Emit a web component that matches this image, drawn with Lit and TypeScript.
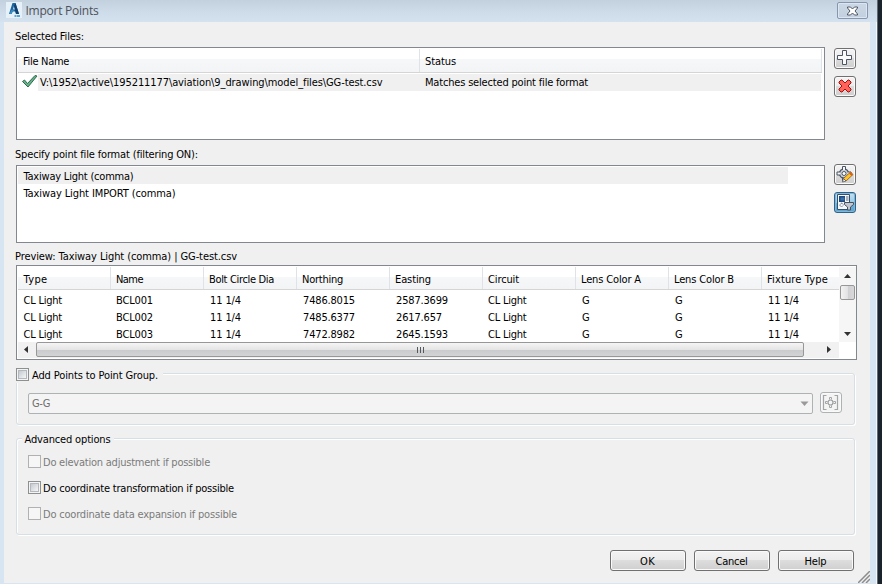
import { LitElement, html, css, svg } from "lit";
import { customElement, property } from "lit/decorators.js";

@customElement("fit-text")
class FitText extends LitElement {
  @property({ type: Number }) w = 0;
  @property() text = "";
  static styles = css`
    :host { display: inline-block; white-space: pre; flex: none; }
  `;
  render() {
    return html`<span>${this.text}</span>`;
  }
  firstUpdated() {
    const s = this.renderRoot.querySelector("span")!;
    const n = s.getBoundingClientRect().width;
    if (this.w && n) s.style.letterSpacing = (this.w - n) / this.text.length + "px";
  }
}

const t = (text: string, w = 0) => html`<fit-text .text=${text} .w=${w}></fit-text>`;

const icons: Record<string, unknown> = {
  plus: svg`<path d="M7.500 1.500h4v5h5v4h-5v5h-4v-5h-5v-4h5z" fill="#fbfbfc" stroke="#4b5563"/>`,
  del: svg`<path d="M4 5l2-2h1L10 6l3-3h1l2 2v1l-3 3 3 3v1l-2 2h-1l-3-3-3 3H6l-2-2v-1l3-3-3-3z" fill="#ff6258" stroke="#a80c0c"/>`,
  edit: svg`<circle cx="9" cy="8.500" r="4.500" fill="#c9ced6" stroke="#4b5563" stroke-width="1.300"/><path d="M7.500 5V1.500h3V5M5.500 7H2v3h3.500M12.500 7H16v3h-3.500M7.500 12v3.500h3" fill="#f5f5f5" stroke="#4b5563"/><circle cx="9" cy="8.500" r="2" fill="#fff" stroke="#4b5563"/><path d="M8.500 13.500l7-6.500 2.500 2.500-7 6.500z" fill="#ffc42a" stroke="#8a5a1c" stroke-width=".8"/><path d="M14 8.400l1.500-1.400L18 9.500l-1.500 1.400z" fill="#d8601b"/><path d="M8.500 13.500L11 16l-3.500 1z" fill="#fff" stroke="#555" stroke-width=".8"/>`,
  filter: svg`<path d="M2.500 1.500h12v15h-12z" fill="#f6f8fa" stroke="#34506c"/><path d="M4 3h6v6H4z" fill="#1d4a80"/><path d="M5.500 4.500h4v3h-4z" fill="#3971ab"/><path d="M11 3h2.500v5H11z" fill="#a9b0ba"/><path d="M6.500 10l2 2-2 2-2-2z" fill="none" stroke="#4a5a70" stroke-dasharray="1.500 1"/><path d="M9.500 9.500h9v2l-3 2.500v3h-3v-3l-3-2.500z" fill="#c3c8d0" stroke="#46525f"/>`,
  group: svg`<path d="M5.500 2.500h-3v14h3M13.500 2.500h3v14h-3" fill="none" stroke="#a2a4a6" stroke-width="1.200"/><circle cx="9.500" cy="9.500" r="2.500" fill="none" stroke="#999c9f" stroke-width="1.200"/><path d="M8.500 6.500v-2h2v2M8.500 12.500v2h2v-2M6.500 8.500h-2v2h2M12.500 8.500h2v2h-2" fill="none" stroke="#a2a4a6"/>`,
};

const iconButton = (name: string, cls = "") =>
  html`<button class="ib ${cls}"><svg width="20" height="19" viewBox="0 0 20 19">${icons[name]}</svg></button>`;

const check = (label: string, w: number, off = false) =>
  html`<div class="check ${off ? "off" : ""}"><i class="box"></i>${t(label, w)}</div>`;

const arrow = (d: string, cls = "") =>
  html`<svg class="arrow ${cls}" width="9" height="9" viewBox="0 0 9 9"><path d=${d} /></svg>`;

const columns: [string, number, string[], number][] = [
  ["Type", 24, ["CL Light", "CL Light", "CL Light"], 38.5],
  ["Name", 27, ["BCL001", "BCL002", "BCL003"], 37],
  ["Bolt Circle Dia", 65, ["11 1/4", "11 1/4", "11 1/4"], 31],
  ["Northing", 41, ["7486.8015", "7485.6377", "7472.8982"], 52],
  ["Easting", 36, ["2587.3699", "2617.657", "2645.1593"], 52],
  ["Circuit", 31, ["CL Light", "CL Light", "CL Light"], 38.5],
  ["Lens Color A", 60, ["G", "G", "G"], 7.5],
  ["Lens Color B", 60, ["G", "G", "G"], 7.5],
  ["Fixture Type", 61, ["11 1/4", "11 1/4", "11 1/4"], 31],
];

@customElement("app-root")
class AppRoot extends LitElement {
  static styles = css`
    :host { display: block; width: 882px; height: 584px; overflow: hidden; background: #1a232c;
      font: 11px/17px "DejaVu Sans Condensed", "DejaVu Sans", sans-serif; font-stretch: condensed; color: #000; }
    * { box-sizing: border-box; }
    .window { width: 878px; height: 584px; background: #d7e4f2; border-right: 1px solid #626a72;
      display: flex; flex-direction: column; box-shadow: inset -1px 0 #f4f8fc; }
    .title { height: 22px; flex: none; display: flex; align-items: flex-start; padding: 2px 9px 0 6px; background: linear-gradient(#c3d0de, #cfdce9 60%, #d4e1ee);
      font: 12px/18px "Open Sans", "Noto Sans", sans-serif; color: #4c5259; }
    .logo { margin-right: 3.5px; flex: none; }
    .close { margin-left: auto; width: 31px; height: 17px; border: 1px solid #8795b0; border-radius: 2px; background: linear-gradient(#cbd7e4, #c3d0df);
      box-shadow: inset 0 0 0 1px #dce6f0; display: grid; place-items: center; }
    .body { margin-left: 4px; width: 866px; height: 561px; background: #f0f0f0; padding: 6px 0 0 12px; position: relative; }
    .label { height: 17px; margin-left: -1px; }
    .l2 { margin-top: 6px; }
    .l3 { margin-top: 5px; }
    .line { display: flex; gap: 9px; }
    .list { background: #fff; border: 1px solid #828790; width: 809px; padding: 1px; flex: none; }
    .files { height: 93px; margin-top: 2px; }
    .formats { height: 78px; margin-top: 2px; }
    .tools { display: flex; flex-direction: column; gap: 7px; padding-top: 3px; }
    .formatline .tools { padding-top: 1px; }
    .ib { width: 22px; height: 21px; padding: 0; border: 1px solid #707070; border-radius: 3px; background: linear-gradient(#f4f4f4, #ebebeb 50%, #dcdcdc 50%, #cfcfcf); box-shadow: inset 0 0 0 1px #fafafa; display: grid; place-items: center; }
    .ib svg { display: block; }
    .ib.on { border-color: #2c628b; background: linear-gradient(#c5e1f2, #9bcbe6 50%, #6cb0d8 50%, #5ba3d0); box-shadow: inset 0 0 0 1px #82b6d4; }
    .ib.dim { border-color: #adb2b5; background: #f4f4f4; }
    .head { display: flex; background: linear-gradient(#fff 45%, #f6f7f9 45%, #f3f4f6); border-bottom: 1px solid #d5d5d5; }
    .head .cell { border-right: 1px solid #dfe2e6; }
    .files .head { height: 24px; line-height: 25px; margin-right: 1px; }
    .files .cell { width: 402px; padding-left: 5px; flex: none; }
    .filerow { display: flex; height: 17px; margin-top: 1px; }
    .tick { width: 20px; padding-left: 3px; flex: none; }
    .hl { flex: 1; background: #f0f0f0; display: flex; margin-right: 2px; }
    .hl .name { width: 387px; padding-left: 2px; flex: none; }
    .fmt { width: 770px; height: 17px; line-height: 19px; padding-left: 5.5px; }
    .fmt.sel { background: #f0f0f0; }
    .preview { width: 841px; height: 95px; border: 1px solid #828790; background: #fff; display: grid; grid-template: 75px 16px / 821px 17px; padding: 1px; }
    .grid .head { height: 23px; line-height: 25px; }
    .grid { overflow: hidden; }
    .grid .cell { width: 93px; flex: none; padding-left: 5px; }
    .grid .cell:first-child { padding-left: 5.5px; }
    .grid .cell:last-child { width: 76px; border: 0; }
    .rows { padding-top: 2px; }
    .row { display: flex; height: 17px; }
    .row .cell:nth-child(3), .row .cell:nth-child(n + 7), .row .cell:nth-child(5), .row .cell:nth-child(4) { padding-left: 6px; }
    .vbar { background: #f6f6f6; display: flex; flex-direction: column; align-items: center; padding: 5px 0 4px; }
    .vthumb { width: 15px; height: 15px; margin: 4px 0 auto; border: 1px solid #979797; border-radius: 2px; background: linear-gradient(90deg, #f3f3f3, #e2e2e4 50%, #cfd0d2 50%, #d8d8da); }
    .hbar { background: #f1f1f1; display: flex; align-items: center; padding: 0 5px 1px 3px; }
    .hthumb { width: 768px; height: 15px; margin: 0 auto 0 6px; border: 1px solid #979797; border-radius: 2px; background: linear-gradient(#f5f5f5, #e5e5e5 50%, #c9cacb 50%, #d3d4d5); display: flex; justify-content: center; align-items: center; gap: 2px; }
    .hthumb i { width: 1px; height: 6px; background: #55595e; }
    .arrow { fill: #333; flex: none; display: block; }
    .group { width: 839px; position: relative; border: 1px solid #d5dfe5; border-radius: 3px; box-shadow: inset 1px 1px #fff, 1px 1px #fff; }
    .cap { position: absolute; background: #f0f0f0; height: 17px; display: flex; align-items: center; }
    .points { height: 52px; margin-top: 13px; padding: 19px 0 0 11px; display: flex; gap: 7px; }
    .points .cap { left: -1px; top: -8px; padding-right: 5px; }
    .points .cap fit-text { margin-top: 1px; margin-bottom: -1px; }
    .combo { width: 785px; height: 21px; border: 1px solid #adb2b5; border-radius: 2px; background: #f4f4f4; color: #6d6d6d; padding: 0 3px; display: flex; align-items: center; justify-content: space-between; line-height: 21px; }
    .combo .arrow { fill: #9a9a9a; }
    .points .ib { margin-top: -1px; }
    .adv { height: 97px; margin-top: 13px; padding: 15px 0 0 11px; display: flex; flex-direction: column; gap: 9px; }
    .adv .cap { left: 5px; top: -8px; padding: 0 3px 0 2.5px; }
    .check { display: flex; align-items: center; gap: 2px; height: 17px; }
    .cap.check { gap: 3px; }
    .box { width: 13px; height: 13px; border: 1px solid #8e8f8f; background: linear-gradient(135deg, #c5cad0, #f6f6f6) content-box, #f4f4f4; padding: 2px; flex: none; box-shadow: inset 0 0 0 1px #f4f4f4, inset 0 0 0 2px #b3b8be; }
    .adv .box { margin-bottom: 2px; }
    .off { color: #7b7b7b; }
    .off .box { border-color: #b1b1b1; background: #f6f6f6; box-shadow: none; }
    .foot { display: flex; gap: 8px; margin: 15px 0 0 594px; }
    .btn { width: 76px; height: 21px; border: 1px solid #707070; border-radius: 3px; background: linear-gradient(#f3f3f3, #ebebeb 50%, #dddddd 50%, #cfcfcf); box-shadow: inset 0 0 0 1px #fafafa; font: inherit; line-height: 19px; padding: 1px 1px 0 0; color: #000; }
    .grip { position: absolute; right: 0; bottom: 0; }
  `;

  render() {
    return html`<div class="window">
      <div class="title">
        <svg class="logo" width="16" height="16" viewBox="0 0 16 16"><path fill="#e6f0f7" d="M0 0h16v16H0z"/><path fill="#1b669f" d="M3 12L6.500 1h3L13 12h-3L9.300 9.500H6.800L5.500 12z"/><path fill="#e6f0f7" d="M8 4l1 3.500H7z"/><path fill="#103f70" d="M9.500 1L13 12h-3L8 4z"/><path fill="#3c8dc4" d="M3 12l2.500-4 4-1-3 2.500-1 2.500z"/><path stroke="#2b8ccb" stroke-width="1.500" d="M8.500 14H10M10.500 14h3.500"/></svg>
        ${t("Import Points", 73)}
        <div class="close"><svg width="13" height="10" viewBox="0 0 13 10"><path d="M1.500 1h3l2 2 2-2h3v1L9 5l2.500 3v1h-3l-2-2-2 2h-3V8L4 5 1.500 2z" fill="#fff" stroke="#4e5666"/></svg></div>
      </div>
      <div class="body">
        <div class="label">${t("Selected Files:", 69)}</div>
        <div class="line">
          <div class="list files">
            <div class="head"><div class="cell">${t("File Name", 46)}</div><div class="cell">${t("Status", 31)}</div></div>
            <div class="filerow">
              <div class="tick"><svg width="17" height="15" viewBox="0 0 17 15"><path d="M1.500 7.500l2-1.500 3 3.500 7.500-8 2 .5L7 13z" fill="#65b38c" stroke="#2e6b4c"/></svg></div>
              <div class="hl"><div class="name">${t("V:\\1952\\active\\195211177\\aviation\\9_drawing\\model_files\\GG-test.csv", 342.5)}</div>${t("Matches selected point file format", 163)}</div>
            </div>
          </div>
          <div class="tools">${iconButton("plus")}${iconButton("del")}</div>
        </div>
        <div class="label l2">${t("Specify point file format (filtering ON):", 183)}</div>
        <div class="line formatline">
          <div class="list formats">
            <div class="fmt sel">${t("Taxiway Light (comma)", 110)}</div>
            <div class="fmt">${t("Taxiway Light IMPORT (comma)", 152)}</div>
          </div>
          <div class="tools">${iconButton("edit")}${iconButton("filter", "on")}</div>
        </div>
        <div class="label l3">${t("Preview: Taxiway Light (comma) | GG-test.csv", 222)}</div>
        <div class="preview">
          <div class="grid">
            <div class="head">${columns.map((c) => html`<div class="cell">${t(c[0], c[1])}</div>`)}</div>
            <div class="rows">${[0, 1, 2].map((r) => html`<div class="row">${columns.map((c) => html`<div class="cell">${t(c[2][r], c[2][r] === "2617.657" ? 46 : c[3])}</div>`)}</div>`)}</div>
          </div>
          <div class="vbar">${arrow("M1 6l3.500-4L8 6z")}<i class="vthumb"></i>${arrow("M1 3l3.500 4L8 3z")}</div>
          <div class="hbar">${arrow("M7 1v7L3 4.500z")}<div class="hthumb"><i></i><i></i><i></i></div>${arrow("M2 1v7l4-3.500z")}</div>
        </div>
        <div class="group points">
          <div class="cap check"><i class="box"></i>${t("Add Points to Point Group.", 126)}</div>
          <div class="combo">${t("G-G", 18)}${arrow("M.500 2.500h8L4.500 7z")}</div>
          ${iconButton("group", "dim")}
        </div>
        <div class="group adv">
          <div class="cap">${t("Advanced options", 86)}</div>
          ${check("Do elevation adjustment if possible", 167, true)}
          ${check("Do coordinate transformation if possible", 191)}
          ${check("Do coordinate data expansion if possible", 194, true)}
        </div>
        <div class="foot">
          <button class="btn">${t("OK", 15)}</button><button class="btn">${t("Cancel", 32)}</button><button class="btn">${t("Help", 22)}</button>
        </div>
        <svg class="grip" width="12" height="12" viewBox="0 0 12 12"><path d="M0 12L12 0M4 12l8-8M8 12l4-4" stroke="#8c8c8c" stroke-width="1.500"/></svg>
      </div>
    </div>`;
  }
}
